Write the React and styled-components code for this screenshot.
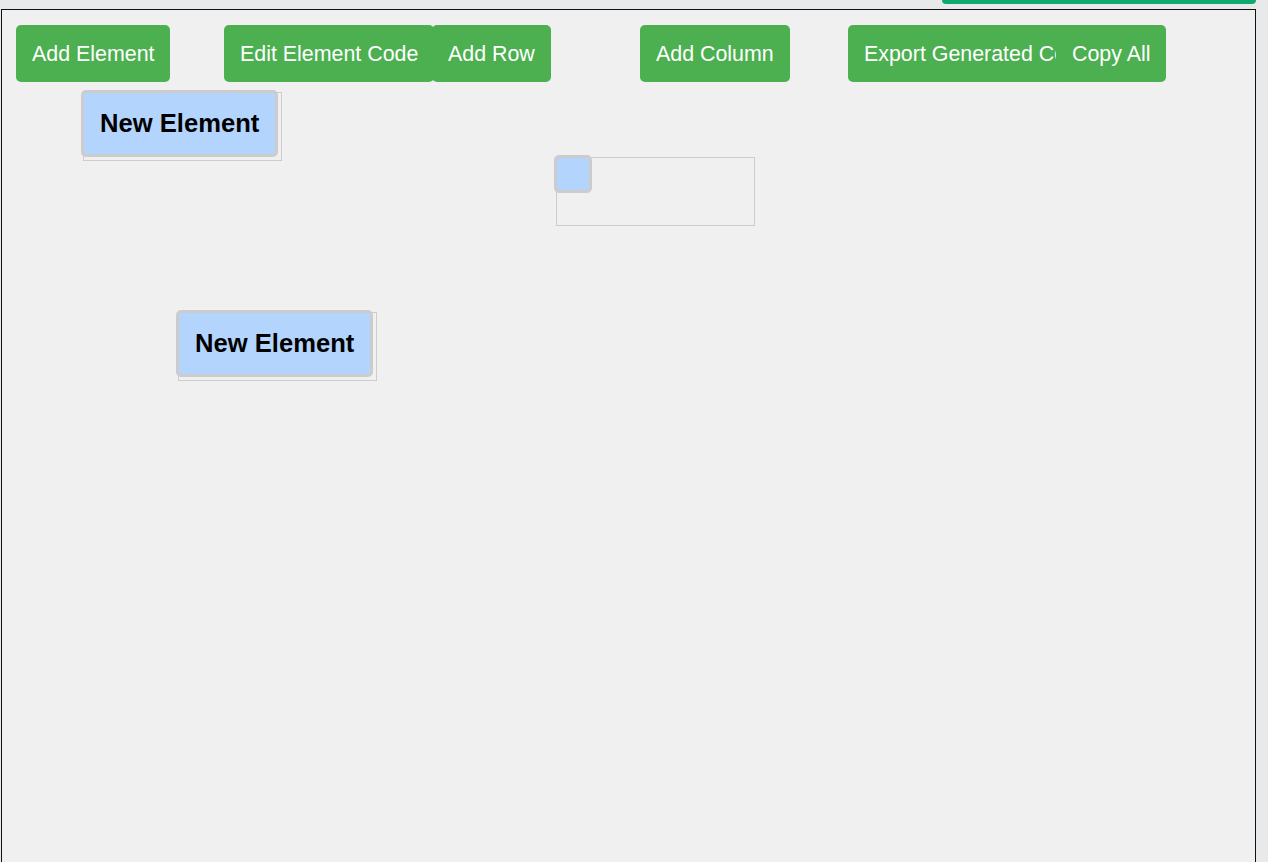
import styled, { createGlobalStyle } from 'styled-components';

const GlobalStyle = createGlobalStyle`
    body {
        margin: 0;
        background: #e8e9eb;
        font-family: "Liberation Sans", Arial, sans-serif;
        overflow: hidden;
    }
`

const Page = styled.div`
    width: 1255px;
    padding-left: 1px;
`
const Header = styled.div`
    height: 9px;
    display: flex;
    justify-content: flex-end;
`
const TopBar = styled.div`
    width: 314px;
    height: 4px;
    background: #0fa96f;
    border-radius: 0 0 6px 6px;
`
const Canvas = styled.div`
    position: relative;
    box-sizing: border-box;
    width: 1255px;
    height: 900px;
    border: 1px solid #111;
    background: #f0f0f0;
`
const Toolbar = styled.div`
    display: grid;
    grid-template-columns: repeat(6, 208px);
    padding: 15px 14px 0;
`
const Button = styled.button`
    justify-self: start;
    white-space: nowrap;
    border: none;
    border-radius: 5px;
    padding: 16px;
    height: 57px;
    background-color: #4caf50;
    color: white;
    font-family: "Liberation Sans", Arial, sans-serif;
    font-size: 21.4px;
    line-height: 24px;
    cursor: pointer;
`
const Slot = styled.div`
    position: absolute;
    box-sizing: border-box;
    width: 199px;
    height: 69px;
    border: 1px solid #ccc;
`
const Element = styled.div`
    position: absolute;
    top: -3px;
    left: -3px;
    padding: 16px;
    background: #b3d4fc;
    border: 3px solid #ccc;
    border-radius: 5px;
    font-family: "Liberation Sans", Arial, sans-serif;
    font-weight: bold;
    font-size: 25.6px;
    line-height: 29px;
    color: #000;
    white-space: nowrap;
`
const Empty = styled(Element)`
    width: 0;
    height: 0;
`

const buttons = ['Add Element', 'Edit Element Code', 'Add Row', 'Add Column', 'Export Generated Code', 'Copy All']

// free-canvas positions of the dropped elements
const nodes = [
    { x: 81, y: 82, text: 'New Element' },
    { x: 554, y: 147, text: '' },
    { x: 176, y: 302, text: 'New Element' },
]

function App() {
    return (
        <>
            <GlobalStyle />
            <Page>
                <Header>
                    <TopBar />
                </Header>
                <Canvas>
                    <Toolbar>
                        {buttons.map((b) => (
                            <Button key={b}>{b}</Button>
                        ))}
                    </Toolbar>
                    {nodes.map((n, i) => (
                        <Slot key={i} style={{ left: n.x, top: n.y }}>
                            {n.text ? <Element>{n.text}</Element> : <Empty />}
                        </Slot>
                    ))}
                </Canvas>
            </Page>
        </>
    )
}

export default App
